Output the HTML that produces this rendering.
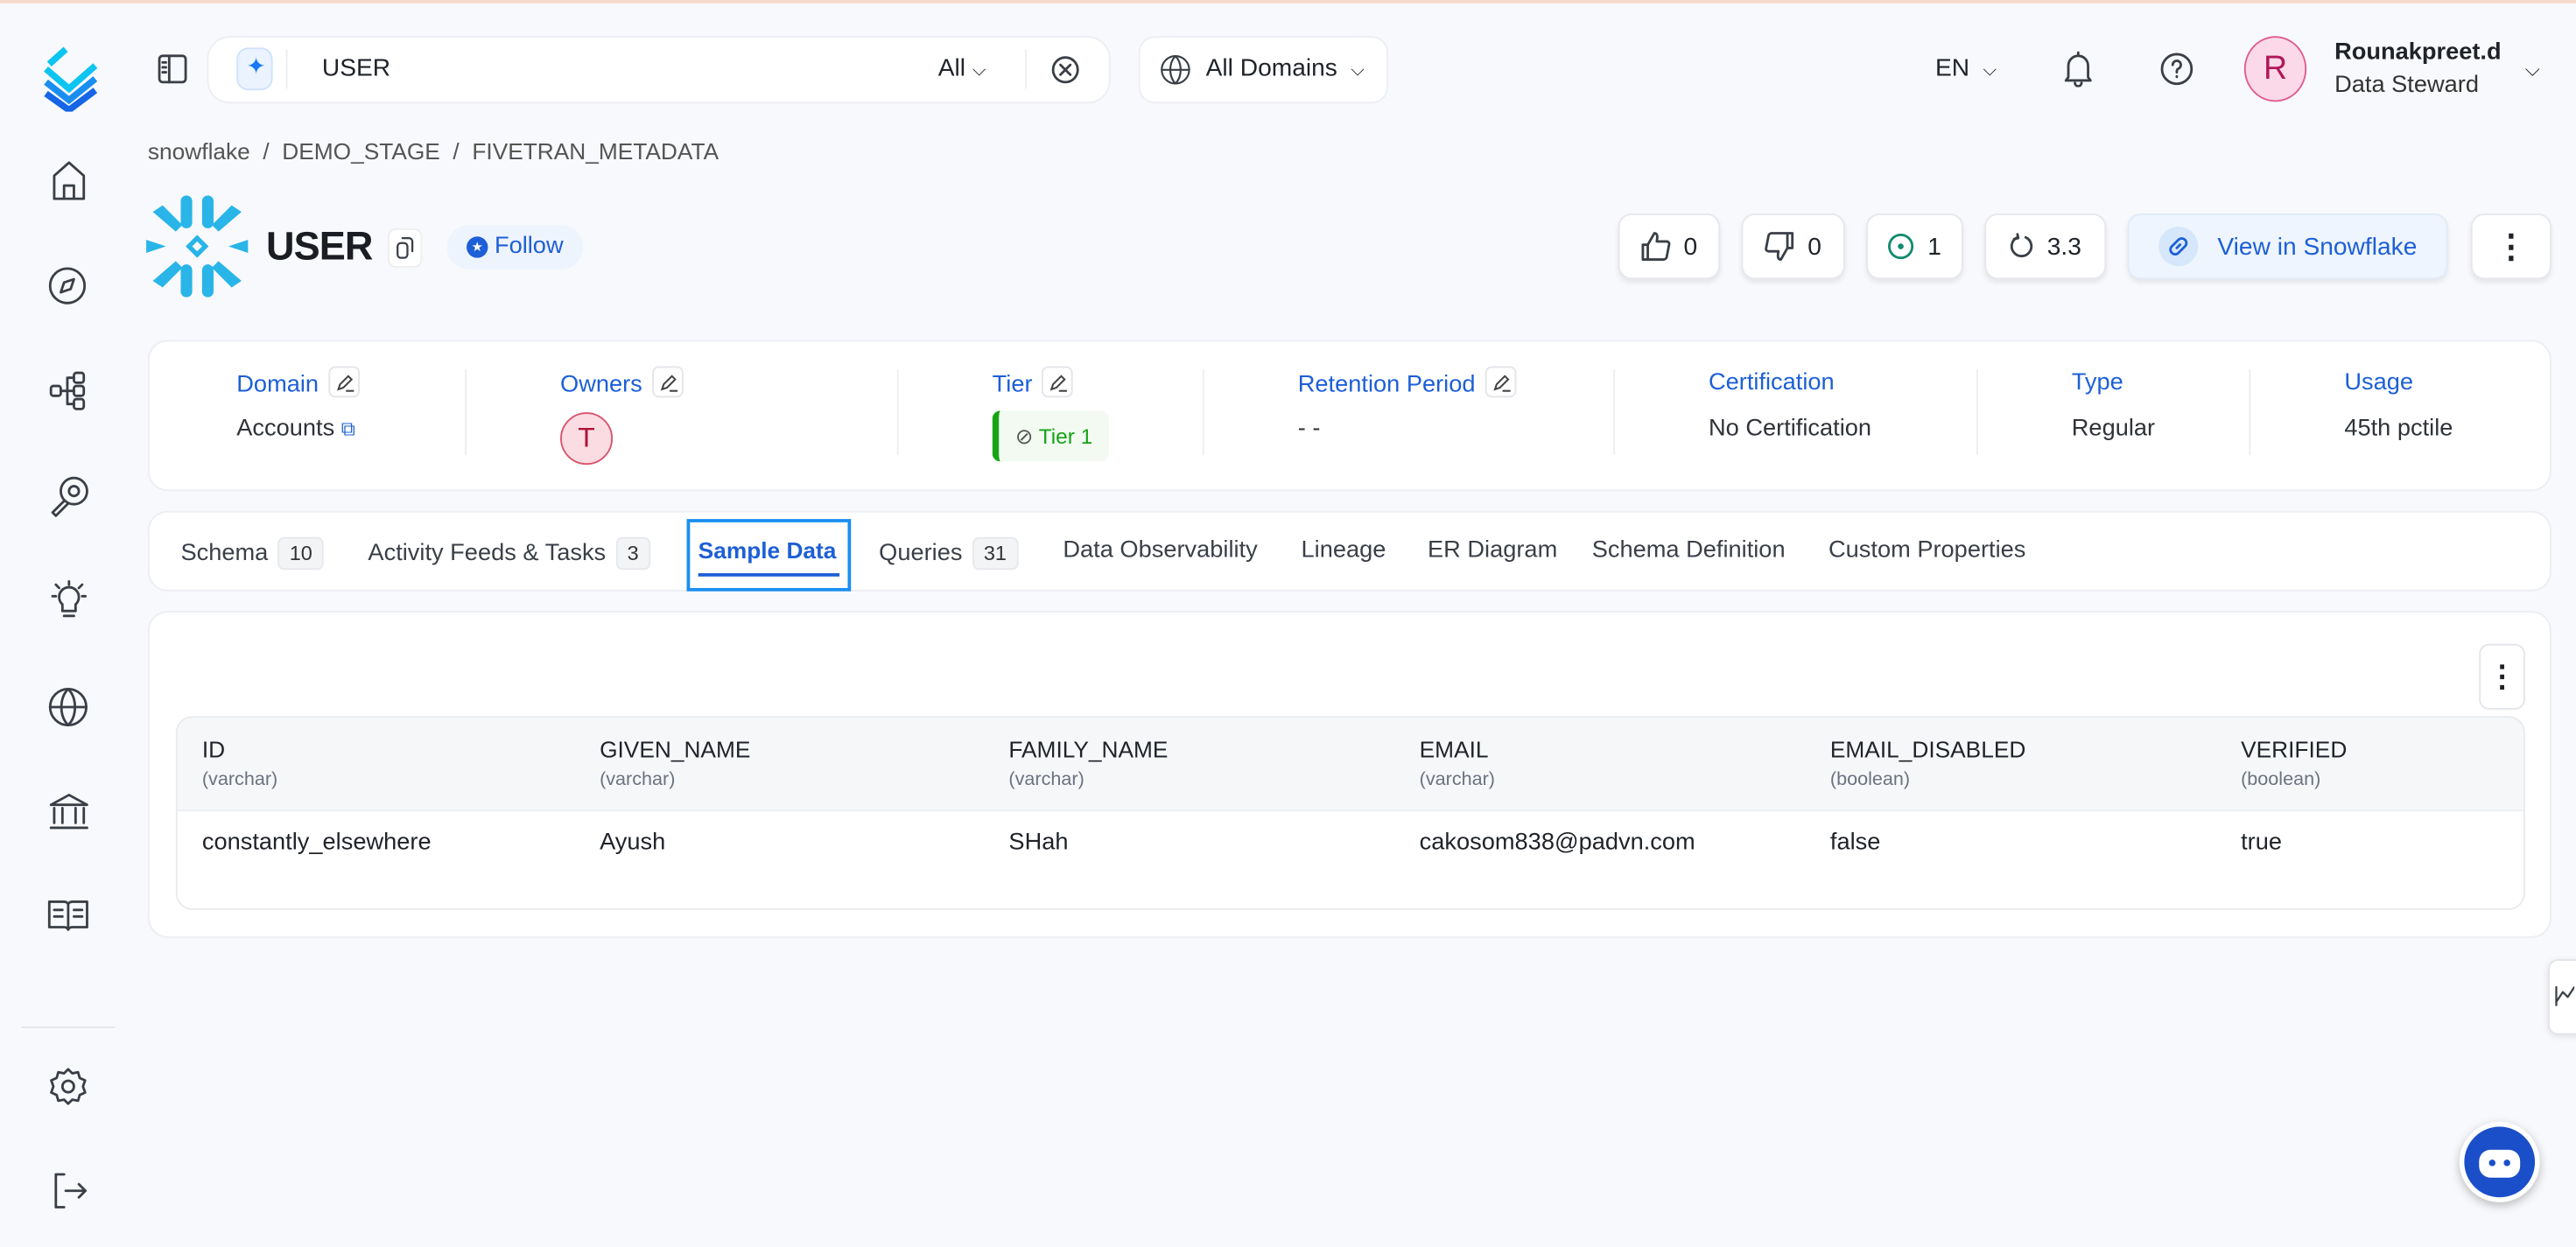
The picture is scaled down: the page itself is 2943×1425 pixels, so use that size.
<!DOCTYPE html>
<html><head><meta charset="utf-8">
<style>
*{box-sizing:border-box;margin:0;padding:0}
html,body{width:2943px;height:1424px;overflow:hidden;background:#f8f9fc}
#s{position:absolute;left:0;top:0;width:1568px;height:759px;transform:scale(1.87691);transform-origin:0 0;font-family:"Liberation Sans",sans-serif;color:#1f2329;background:#f8f9fc}
.a{position:absolute}
.card{position:absolute;background:#fff;border:1px solid #eceef3;border-radius:12px}
.ic{position:absolute;fill:none;stroke:#3a3f47;stroke-width:1.5;stroke-linecap:round;stroke-linejoin:round}
.t{position:absolute;white-space:nowrap}
.btn{position:absolute;top:130px;height:40px;background:#fff;border:1px solid #e6e8ee;border-radius:8px;box-shadow:0 2px 3px rgba(0,0,0,.08);font-size:15px;display:flex;align-items:center;justify-content:center;gap:8px}
.lbl{color:#1d5fd6;font-size:14.5px}
.val{color:#2f3338;font-size:14.5px}
.ed{display:inline-block;width:19px;height:19px;border:1px solid #e3e5ea;border-radius:4px;vertical-align:middle;margin-left:6px;position:relative;top:-2px}
.ed svg{position:absolute;left:3px;top:3px;fill:none;stroke:#444;stroke-width:1.1;stroke-linecap:round}
.dv{position:absolute;top:225px;width:1px;height:52px;background:#eceef2}
.tab{position:absolute;top:327px;font-size:14.5px;color:#3a3f47}
.bd{display:inline-block;font-size:12.5px;background:#f3f4f6;border:1px solid #e6e8ec;border-radius:4px;padding:2px 6px;margin-left:6px;color:#333}
.th{position:absolute;top:448px;font-size:14px;color:#1f2329}
.th small{display:block;font-size:11.5px;color:#6b7280;margin-top:5px}
.td{position:absolute;top:505px;font-size:14.5px;color:#1f2329}
</style></head><body>
<div id="s">
<div class="a" style="left:0;top:0;width:1568px;height:2px;background:#f6d9cc"></div>
<svg class="a" style="left:24px;top:28px" width="42" height="40" viewBox="0 0 42 40"><path d="M4 14 L18 26 L34 12" stroke="#0ec4f0" stroke-width="4" fill="none"/><path d="M4 22 L18 33 L34 20" stroke="#1a8ef0" stroke-width="4" fill="none"/><path d="M4 29 L18 39 L34 27" stroke="#1565e6" stroke-width="4" fill="none"/><path d="M16 2 L6 11" stroke="#0ec4f0" stroke-width="4"/></svg>
<svg class="ic" style="left:30px;top:97px" width="24" height="26" viewBox="0 0 24 26"><path d="M3 10 L12 2 L21 10 V24 H3Z M9 24 V16 H15 V24"/></svg>
<svg class="ic" style="left:29px;top:162px" width="24" height="24" viewBox="0 0 24 24"><circle cx="12" cy="12" r="10.5"/><path d="M8 16 L10 10 L16 8 L14 14Z"/></svg>
<svg class="ic" style="left:30px;top:225px" width="24" height="26" viewBox="0 0 24 26"><rect x="1" y="10" width="6" height="6" rx="1.5"/><rect x="15" y="2" width="6" height="6" rx="1.5"/><rect x="15" y="10" width="6" height="6" rx="1.5"/><rect x="15" y="18" width="6" height="6" rx="1.5"/><path d="M7 13 H15 M11 5 V21 M11 5 H15 M11 21 H15"/></svg>
<svg class="ic" style="left:29px;top:289px" width="26" height="26" viewBox="0 0 26 26"><circle cx="16" cy="10" r="8"/><circle cx="16" cy="10" r="3"/><path d="M10 16 L3 23 L5 25 L12 18"/></svg>
<svg class="ic" style="left:29px;top:353px" width="26" height="26" viewBox="0 0 26 26"><path d="M9 15 a6 6 0 1 1 8 0 V19 H9Z M10 22 H16 M13 1 V3 M3 10 H5 M21 10 H23 M5 3 L7 5 M21 3 L19 5"/></svg>
<svg class="ic" style="left:29px;top:418px" width="25" height="25" viewBox="0 0 25 25"><circle cx="12.5" cy="12.5" r="11"/><path d="M1.5 12.5 H23.5 M12.5 1.5 C7 7 7 18 12.5 23.5 C18 18 18 7 12.5 1.5"/></svg>
<svg class="ic" style="left:29px;top:482px" width="26" height="25" viewBox="0 0 26 25"><path d="M2 8 L13 2 L24 8 Z M4 10 V19 M9 10 V19 M17 10 V19 M22 10 V19 M2 22 H24"/></svg>
<svg class="ic" style="left:28px;top:546px" width="27" height="22" viewBox="0 0 27 22"><path d="M2 3 H11 C12.5 3 13.5 4 13.5 5 V20 C13 19 12 18.5 11 18.5 H2Z M25 3 H16 C14.5 3 13.5 4 13.5 5 V20 C14 19 15 18.5 16 18.5 H25Z M5 8 H10 M5 12 H10 M17 8 H22 M17 12 H22"/></svg>
<div class="a" style="left:13px;top:625px;width:57px;height:1px;background:#e3e5ea"></div>
<svg class="ic" style="left:29px;top:649px" width="25" height="25" viewBox="0 0 25 25"><circle cx="12.5" cy="12.5" r="3.5"/><path d="M12.5 2 L15 4.5 L18.5 3.8 L19.5 7.3 L22.8 8.8 L21.5 12.5 L22.8 16.2 L19.5 17.7 L18.5 21.2 L15 20.5 L12.5 23 L10 20.5 L6.5 21.2 L5.5 17.7 L2.2 16.2 L3.5 12.5 L2.2 8.8 L5.5 7.3 L6.5 3.8 L10 4.5Z"/></svg>
<svg class="ic" style="left:30px;top:713px" width="24" height="24" viewBox="0 0 24 24"><path d="M9 2 H4 V22 H9 M10 12 H22 M18 8 L22 12 L18 16"/></svg>
<svg class="ic" style="left:96px;top:33px" width="18" height="18" viewBox="0 0 18 18"><rect x="1" y="1" width="16" height="16" rx="2"/><path d="M7 1 V17 M3 5 H5 M3 8 H5 M3 11 H5"/></svg>
<div class="card" style="left:126px;top:22px;width:550px;height:41px;border-radius:14px"></div>
<div class="a" style="left:144px;top:29px;width:22px;height:26px;background:#eaf3ff;border:1px solid #cfe2fb;border-radius:7px"></div>
<div class="t" style="left:150px;top:32px;color:#1677ff;font-size:14px">✦</div>
<div class="a" style="left:174px;top:30px;width:1px;height:24px;background:#eee"></div>
<div class="t" style="left:196px;top:33px;font-size:15px">USER</div>
<div class="t" style="left:571px;top:33px;font-size:15px">All <span style="font-size:11px">⌵</span></div>
<div class="a" style="left:624px;top:30px;width:1px;height:24px;background:#eee"></div>
<svg class="ic" style="left:640px;top:34px" width="17" height="17" viewBox="0 0 17 17"><circle cx="8.5" cy="8.5" r="7.5"/><path d="M5.5 5.5 L11.5 11.5 M11.5 5.5 L5.5 11.5"/></svg>
<div class="card" style="left:693px;top:22px;width:152px;height:41px;border-radius:10px"></div>
<svg class="ic" style="left:706px;top:33px" width="19" height="19" viewBox="0 0 25 25"><circle cx="12.5" cy="12.5" r="11"/><path d="M1.5 12.5 H23.5 M12.5 1.5 C7 7 7 18 12.5 23.5 C18 18 18 7 12.5 1.5"/></svg>
<div class="t" style="left:734px;top:33px;font-size:15px">All Domains <span style="font-size:11px;margin-left:4px">⌵</span></div>
<div class="t" style="left:1178px;top:33px;font-size:15px">EN <span style="font-size:11px;margin-left:4px">⌵</span></div>
<svg class="ic" style="left:1256px;top:31px" width="18" height="22" viewBox="0 0 18 22"><path d="M3 16 V9 a6 6 0 0 1 12 0 V16 L16.5 18 H1.5Z M7 19.5 a2 2 0 0 0 4 0 M9 1 V3"/></svg>
<svg class="ic" style="left:1315px;top:32px" width="20" height="20" viewBox="0 0 20 20"><circle cx="10" cy="10" r="9"/><path d="M7.5 7.5 a2.5 2.5 0 1 1 3.5 2.3 C10 10.3 10 11 10 12 M10 14.5 V14.8"/></svg>
<div class="a" style="left:1366px;top:22px;width:38px;height:40px;border-radius:50%;background:#fcd9e8;border:1px solid #e05c92;color:#b0185a;font-size:20px;text-align:center;line-height:38px">R</div>
<div class="t" style="left:1421px;top:24px;font-size:14.5px;font-weight:bold">Rounakpreet.d</div>
<div class="t" style="left:1421px;top:44px;font-size:14.5px;color:#333">Data Steward</div>
<div class="t" style="left:1537px;top:35px;font-size:12px">⌵</div>
<div class="t" style="left:90px;top:84px;font-size:14px;color:#555">snowflake &nbsp;/&nbsp; DEMO_STAGE &nbsp;/&nbsp; FIVETRAN_METADATA</div>
<svg class="a" style="left:89px;top:119px" width="62" height="62" viewBox="0 0 62 62"><g fill="#29b5e8"><rect x="21" y="0" width="7" height="20" rx="3.5"/><rect x="34" y="0" width="7" height="20" rx="3.5"/><rect x="21" y="42" width="7" height="20" rx="3.5"/><rect x="34" y="42" width="7" height="20" rx="3.5"/><path d="M4 10 L18 22 L22 18 L10 6Z M58 10 L44 22 L40 18 L52 6Z M4 52 L18 40 L22 44 L10 56Z M58 52 L44 40 L40 44 L52 56Z"/><path d="M0 27 L12 31 L0 35 Z M62 27 L50 31 L62 35Z" /><path d="M31 24 L38 31 L31 38 L24 31Z M31 28 L28 31 L31 34 L34 31Z" fill-rule="evenodd"/></g></svg>
<div class="t" style="left:162px;top:137px;font-size:24px;font-weight:bold;color:#1a1d23;letter-spacing:-0.5px">USER</div>
<div class="a" style="left:236px;top:139px;width:21px;height:24px;border:1px solid #eee;border-radius:5px;background:#fff"></div>
<svg class="ic" style="left:241px;top:144px;stroke-width:1.2" width="11" height="14" viewBox="0 0 11 14"><rect x="1" y="4" width="6" height="9" rx="2"/><path d="M4 1 H8 a2 2 0 0 1 2 2 V9"/></svg>
<div class="a" style="left:272px;top:137px;width:83px;height:27px;border-radius:14px;background:#eef4fd"></div>
<div class="a" style="left:284px;top:144px;width:13px;height:13px;border-radius:50%;background:#1d5fd6;color:#fff;font-size:8px;text-align:center;line-height:13px">★</div>
<div class="t" style="left:301px;top:142px;font-size:14.5px;color:#1d5fd6">Follow</div>
<div class="btn" style="left:985px;width:62px"><svg class="ic" style="position:static" width="18" height="18" viewBox="0 0 18 18"><path d="M1 8 H4 V17 H1Z M4 8 L8 1 C10 1 10 3 9.5 6 H15.5 a1.5 1.5 0 0 1 1.5 1.8 L15.5 15.5 a2 2 0 0 1 -2 1.5 H4"/></svg>0</div>
<div class="btn" style="left:1060px;width:63px"><svg class="ic" style="position:static" width="18" height="18" viewBox="0 0 18 18"><path d="M17 10 H14 V1 H17Z M14 10 L10 17 C8 17 8 15 8.5 12 H2.5 a1.5 1.5 0 0 1 -1.5 -1.8 L2.5 2.5 a2 2 0 0 1 2 -1.5 H14"/></svg>0</div>
<div class="btn" style="left:1136px;width:59px"><svg class="ic" style="position:static;stroke:#108a6e" width="16" height="16" viewBox="0 0 16 16"><circle cx="8" cy="8" r="7"/><circle cx="8" cy="8" r="1" fill="#108a6e"/></svg>1</div>
<div class="btn" style="left:1208px;width:74px"><svg class="ic" style="position:static" width="15" height="16" viewBox="0 0 15 16"><path d="M10 2.5 A6 6 0 1 1 5 2.5 M5 0.5 L5.5 3 L3 3.5"/></svg>3.3</div>
<div class="btn" style="left:1295px;width:195px;background:#eef5fe;border-color:#e1ebf8;color:#1d5fd6;font-size:15px;gap:12px"><span style="width:24px;height:24px;border-radius:50%;background:#d6e7fc;display:flex;align-items:center;justify-content:center"><svg class="ic" style="position:static;stroke:#1d5fd6" width="14" height="14" viewBox="0 0 14 14"><path d="M6 8 L8 6 M5 5 L7 3 a2.5 2.5 0 0 1 4 4 L9 9 M5 5 L3 7 a2.5 2.5 0 0 0 4 4 L9 9"/></svg></span>View in Snowflake</div>
<div class="btn" style="left:1504px;width:49px;font-size:20px;font-weight:bold">⋮</div>
<div class="card" style="left:90px;top:207px;width:1463px;height:92px"></div>
<div class="t lbl" style="left:144px;top:225px">Domain<span class="ed"><svg width="12" height="12"><path d="M2 10 L3 7 L8 2 L10 4 L5 9Z M7 11 H11"/></svg></span></div>
<div class="t val" style="left:144px;top:253px">Accounts <span style="color:#1d5fd6;font-size:12px">⧉</span></div>
<div class="dv" style="left:283px"></div>
<div class="t lbl" style="left:341px;top:225px">Owners<span class="ed"><svg width="12" height="12"><path d="M2 10 L3 7 L8 2 L10 4 L5 9Z M7 11 H11"/></svg></span></div>
<div class="a" style="left:341px;top:251px;width:32px;height:32px;border-radius:50%;background:#fcdce3;border:1px solid #d8546e;color:#b01236;font-size:17px;text-align:center;line-height:30px">T</div>
<div class="dv" style="left:546px"></div>
<div class="t lbl" style="left:604px;top:225px">Tier<span class="ed"><svg width="12" height="12"><path d="M2 10 L3 7 L8 2 L10 4 L5 9Z M7 11 H11"/></svg></span></div>
<div class="a" style="left:604px;top:250px;width:71px;height:31px;background:#f2faf1;border-left:4px solid #16a316;border-radius:5px;color:#16a316;font-size:13px;line-height:31px;padding-left:10px"><span style="color:#555">⊘</span> Tier 1</div>
<div class="dv" style="left:732px"></div>
<div class="t lbl" style="left:790px;top:225px">Retention Period<span class="ed"><svg width="12" height="12"><path d="M2 10 L3 7 L8 2 L10 4 L5 9Z M7 11 H11"/></svg></span></div>
<div class="t val" style="left:790px;top:253px">- -</div>
<div class="dv" style="left:982px"></div>
<div class="t lbl" style="left:1040px;top:225px">Certification</div>
<div class="t val" style="left:1040px;top:253px">No Certification</div>
<div class="dv" style="left:1203px"></div>
<div class="t lbl" style="left:1261px;top:225px">Type</div>
<div class="t val" style="left:1261px;top:253px">Regular</div>
<div class="dv" style="left:1369px"></div>
<div class="t lbl" style="left:1427px;top:225px">Usage</div>
<div class="t val" style="left:1427px;top:253px">45th pctile</div>
<div class="card" style="left:90px;top:311px;width:1463px;height:49px"></div>
<div class="tab" style="left:110px">Schema<span class="bd">10</span></div>
<div class="tab" style="left:224px">Activity Feeds &amp; Tasks<span class="bd">3</span></div>
<div class="a" style="left:418px;top:316px;width:100px;height:44px;border:2px solid #1a8ef0"></div>
<div class="tab" style="left:425px;color:#1d5fd6;font-weight:bold;font-size:14px">Sample Data</div>
<div class="a" style="left:425px;top:349px;width:86px;height:2px;background:#1d5fd6"></div>
<div class="tab" style="left:535px">Queries<span class="bd">31</span></div>
<div class="tab" style="left:647px">Data Observability</div>
<div class="tab" style="left:792px">Lineage</div>
<div class="tab" style="left:869px">ER Diagram</div>
<div class="tab" style="left:969px">Schema Definition</div>
<div class="tab" style="left:1113px">Custom Properties</div>
<div class="card" style="left:90px;top:372px;width:1463px;height:199px"></div>
<div class="a" style="left:1509px;top:392px;width:28px;height:40px;border:1px solid #e3e5ea;border-radius:6px;background:#fff;font-size:18px;font-weight:bold;text-align:center;line-height:38px">⋮</div>
<div class="a" style="left:107px;top:436px;width:1430px;height:118px;border:1px solid #e8eaee;border-radius:10px;background:#fff;overflow:hidden"><div style="height:57px;background:#f6f7f9;border-bottom:1px solid #eceef2"></div></div>
<div class="th" style="left:123px">ID<small>(varchar)</small></div>
<div class="th" style="left:365px">GIVEN_NAME<small>(varchar)</small></div>
<div class="th" style="left:614px">FAMILY_NAME<small>(varchar)</small></div>
<div class="th" style="left:864px">EMAIL<small>(varchar)</small></div>
<div class="th" style="left:1114px">EMAIL_DISABLED<small>(boolean)</small></div>
<div class="th" style="left:1364px">VERIFIED<small>(boolean)</small></div>
<div class="td" style="left:123px">constantly_elsewhere</div>
<div class="td" style="left:365px">Ayush</div>
<div class="td" style="left:614px">SHah</div>
<div class="td" style="left:864px">cakosom838@padvn.com</div>
<div class="td" style="left:1114px">false</div>
<div class="td" style="left:1364px">true</div>
<div class="a" style="left:1551px;top:584px;width:20px;height:46px;background:#fff;border:1px solid #e3e5ea;border-radius:6px 0 0 6px;box-shadow:0 1px 4px rgba(0,0,0,.1)"></div>
<svg class="ic" style="left:1555px;top:598px;stroke-width:1.2" width="12" height="16" viewBox="0 0 12 16"><path d="M1 12 L5 6 L8 9 L12 3 M1 3 V14"/></svg>
<div class="a" style="left:1497px;top:683px;width:49px;height:49px;border-radius:50%;background:#1b4fc9;border:3px solid #fff;box-shadow:0 2px 6px rgba(0,0,0,.25)"></div>
<div class="a" style="left:1509px;top:700px;width:25px;height:17px;border-radius:7px;background:#fff"></div>
<div class="a" style="left:1515px;top:706px;width:4px;height:4px;border-radius:50%;background:#1b4fc9"></div>
<div class="a" style="left:1524px;top:706px;width:4px;height:4px;border-radius:50%;background:#1b4fc9"></div>
</div>
</body></html>
